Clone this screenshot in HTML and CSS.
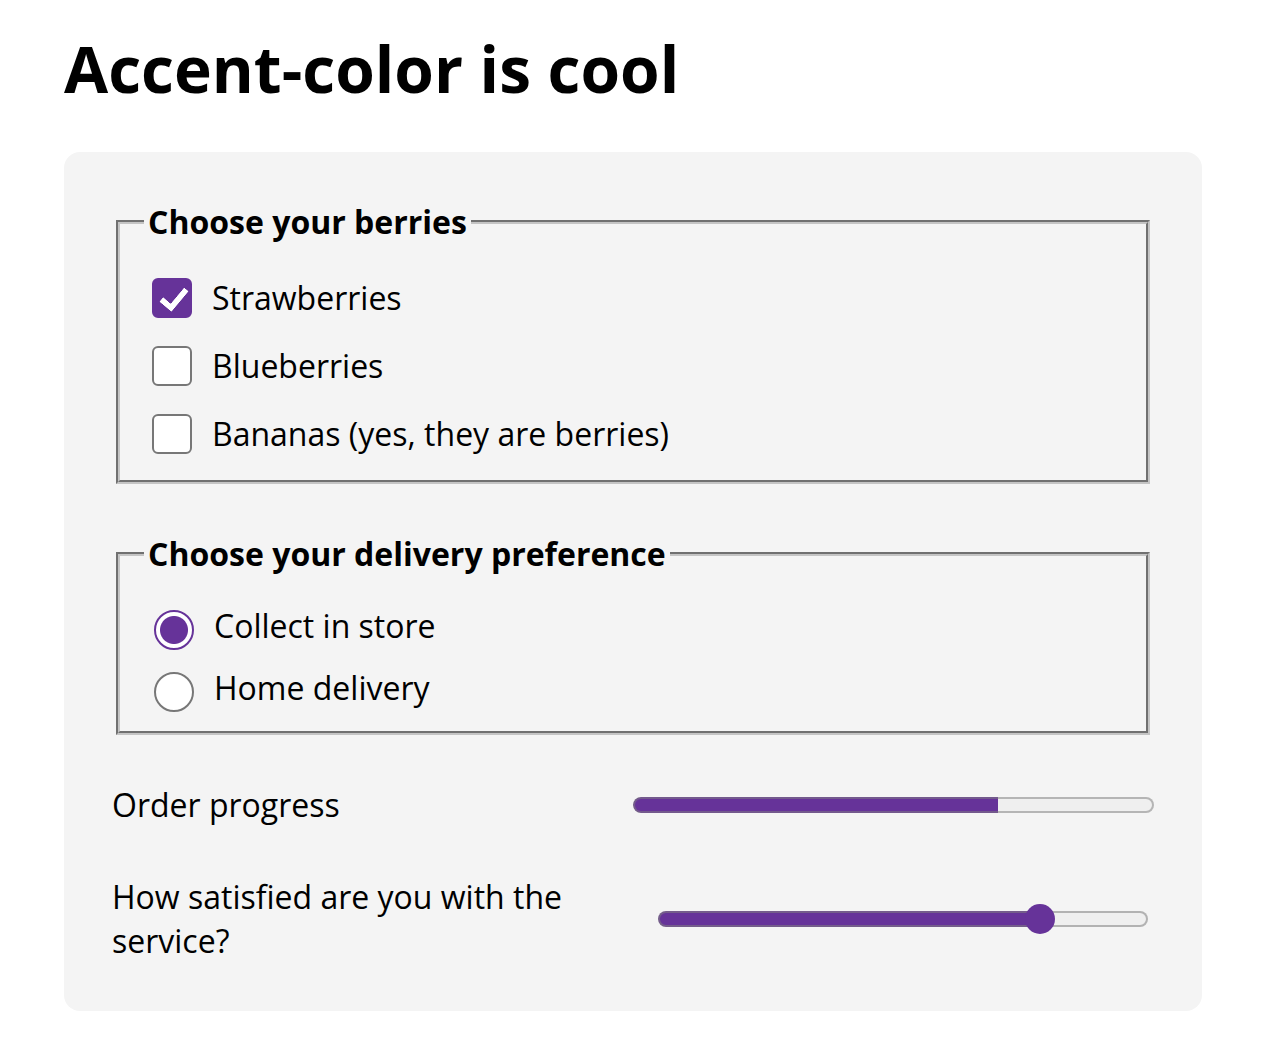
FILE: index.html
```html
<!DOCTYPE html>
<html lang="en">
<head>
<meta charset="utf-8">
<title>Accent-color is cool</title>
<link rel="stylesheet" href="styles.css">
</head>
<body>
  <h1 class="title">Accent-color is cool</h1>
  <form class="card">
    <fieldset class="group group-berries">
      <legend class="group-legend">Choose your berries</legend>
      <div class="options options-berries">
        <label class="option"><input class="check" type="checkbox" name="berries" value="strawberries" checked><span>Strawberries</span></label>
        <label class="option"><input class="check" type="checkbox" name="berries" value="blueberries"><span>Blueberries</span></label>
        <label class="option"><input class="check" type="checkbox" name="berries" value="bananas"><span>Bananas (yes, they are berries)</span></label>
      </div>
    </fieldset>
    <fieldset class="group group-delivery">
      <legend class="group-legend">Choose your delivery preference</legend>
      <div class="options options-delivery">
        <label class="option"><input class="radio" type="radio" name="delivery" value="store" checked><span>Collect in store</span></label>
        <label class="option"><input class="radio" type="radio" name="delivery" value="home"><span>Home delivery</span></label>
      </div>
    </fieldset>
    <div class="field">
      <label class="field-label" for="progress">Order progress</label>
      <progress class="progress" id="progress" max="100" value="70">70%</progress>
    </div>
    <div class="field">
      <label class="field-label" for="satisfaction">How satisfied are you with the service?</label>
      <input class="range" id="satisfaction" type="range" min="0" max="100" value="80">
    </div>
  </form>
</body>
</html>
```
FILE: styles.css
```css
html, body {
  background: #ffffff;
}
body {
  margin: 0;
  padding: 22px 80px 0 64px;
  font-family: "Open Sans", "Noto Sans", sans-serif;
  color: #000;
}
.title {
  margin: 0 0 37px;
  font-size: 64px;
  font-weight: 700;
  line-height: 93px;
}
.card {
  display: flex;
  flex-direction: column;
  gap: 48px;
  padding: 48px;
  background: #f4f4f4;
  border-radius: 16px;
  accent-color: rebeccapurple;
}
.group {
  margin: 0 4px;
  border: 4px groove rgb(196, 196, 196);
  min-width: 0;
}
.group-berries {
  padding: 30px 24px 26px;
}
.group-delivery {
  padding: 27px 24px 22px;
}
.group-legend {
  padding: 0 4px;
  font-size: 32px;
  font-weight: 700;
  line-height: 44px;
}
.options {
  display: flex;
  flex-direction: column;
}
.options-berries { gap: 24px; }
.options-delivery { gap: 18px; }
.option {
  display: flex;
  align-items: flex-start;
  font-size: 32px;
  line-height: 44px;
  height: 44px;
}
.option span {
  position: relative;
}
.options-berries .option span {
  top: 2px;
}
.options-delivery .option span {
  top: 1px;
}
.check {
  appearance: none;
  position: relative;
  flex: none;
  width: 40px;
  height: 40px;
  margin: 4px 20px 0 8px;
  background: #fff;
  border: 2px solid #777;
  border-radius: 6px;
  box-sizing: border-box;
}
.check:checked {
  background: #663399;
  border-color: #663399;
}
.check:checked::after {
  content: "";
  position: absolute;
  left: 12px;
  top: 3px;
  width: 10px;
  height: 21px;
  border: solid #fff;
  border-width: 0 6px 6px 0;
  transform: rotate(40deg);
  border-radius: 1px;
}
.radio {
  appearance: none;
  flex: none;
  width: 40px;
  height: 40px;
  margin: 7px 20px 0 10px;
  background: #fff;
  border: 2px solid #777;
  border-radius: 50%;
  box-sizing: border-box;
}
.radio:checked {
  border-color: #663399;
  background: radial-gradient(circle, #663399 0 13.5px, #fff 14.5px);
}
.field {
  display: grid;
  grid-template-columns: 1fr 1fr;
  align-items: center;
  font-size: 32px;
  line-height: 44px;
}
.progress {
  appearance: none;
  display: block;
  width: 100%;
  height: 16px;
  border: none;
  background: transparent;
}
.progress::-webkit-progress-bar {
  background: #efefef;
  border-radius: 8px;
  box-shadow: inset 0 0 0 2px #b5b5b5;
  overflow: hidden;
}
.progress::-webkit-progress-value {
  box-sizing: border-box;
  background: #663399;
  border: 2px solid rgba(128, 128, 128, 0.5);
  border-right: 0;
  border-radius: 8px 0 0 8px;
}
.range {
  appearance: none;
  display: block;
  width: 490px;
  height: 30px;
  margin: 0 0 0 25px;
  background: transparent;
}
.range::-webkit-slider-runnable-track {
  height: 16px;
  box-sizing: border-box;
  border-radius: 8px;
  border: 2px solid rgba(128, 128, 128, 0.55);
  background: linear-gradient(to right, #663399 0 78%, #efefef 78%) border-box;
}
.range::-webkit-slider-thumb {
  appearance: none;
  width: 30px;
  height: 30px;
  margin-top: -9px;
  border-radius: 50%;
  background: #663399;
  border: none;
}
```
